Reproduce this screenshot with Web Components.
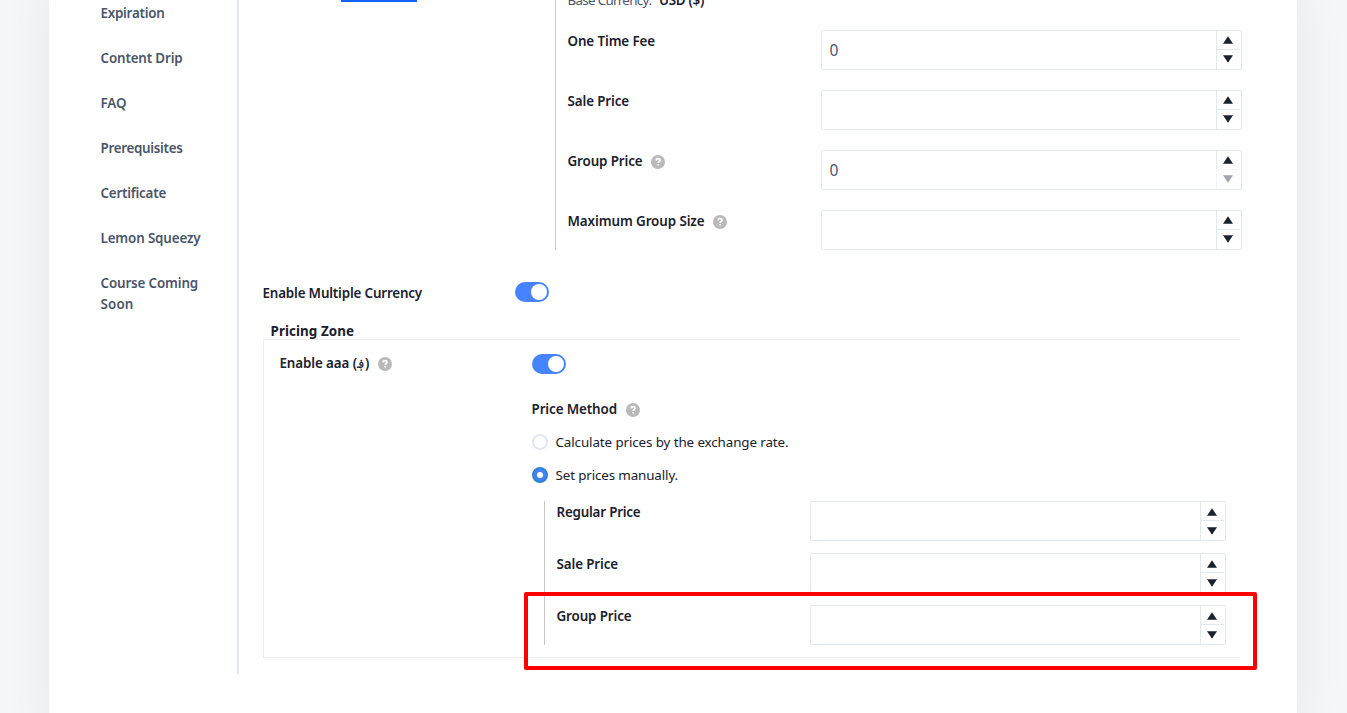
<!DOCTYPE html>
<html lang="en"><head><meta charset="utf-8"><title>Course pricing settings</title>
<style>
html,body{margin:0;height:713px;overflow:hidden;background:#f5f9fc}
body{font:570 13.4px/21px "Noto Sans","DejaVu Sans",sans-serif;color:#1a202c}
</style></head><body>
<course-page></course-page>
<script>
const define=(name,css,html,init)=>customElements.define(name,class extends HTMLElement{
  constructor(){super();this.attachShadow({mode:'open'})}
  connectedCallback(){
    this.shadowRoot.innerHTML=`<style>*{box-sizing:border-box}${css}</style>${typeof html==='function'?html(this):html}`;
    if(init)init(this);
  }
});

// One line of text whose tracking is adjusted to fill the given width.
define('fit-text',':host{display:block;white-space:nowrap;width:max-content;padding-top:1px;margin:0 0 -1px -.5px}','<span><slot></slot></span>',el=>{
  const want=+el.getAttribute('w'),n=el.textContent.length;
  if(!want)return;
  const now=el.shadowRoot.querySelector('span').getBoundingClientRect().width;
  el.style.letterSpacing=((want-now)/n).toFixed(3)+'px';
});

define('help-icon',':host{display:block;width:14px;height:14px}svg{display:block}',
`<svg width="14" height="14" viewBox="0 0 14 14"><circle cx="7" cy="7" r="7" fill="#b9b9b9"/><path d="M5 5.400C5.100 4.200 6 3.700 7 3.700c1.200 0 2 .7 2 1.600C9 6.500 7.200 6.600 7.200 8" fill="none" stroke="#fff" stroke-width="1.700"/><rect x="6.300" y="8.900" width="1.800" height="1.700" rx=".5" fill="#fff"/></svg>`);

define('toggle-switch',`:host{display:flex;justify-content:flex-end;width:34px;height:20px;padding:2px;border-radius:10px;background:#4683fe;box-sizing:border-box}
i{width:16px;height:16px;border-radius:50%;background:#fff}`,'<i></i>');

define('number-field',`:host{display:flex;flex:none;height:40px;border:1px solid #e2e8f0;border-radius:2px;box-sizing:border-box;background:#fff;padding-right:1px}
.v{flex:1;padding:0 0 0 7.500px;font-weight:400;font-size:15.500px;line-height:38px;color:#4a5568}
.s{width:24px;display:flex;flex-direction:column}
.s div{height:18px;border-left:1px solid #e2e8f0;display:flex;justify-content:center;padding-right:1px}
.s div+div{height:20px;border-top:1px solid #e2e8f0}
.s .off{opacity:.4}
svg{display:block;margin-top:var(--arrow-top,5px)}`,
el=>`<div class="v">${el.getAttribute('value')||''}</div><div class="s"><div><svg width="10" height="8"><path d="M5 .3L10 7.700H0z" fill="#1a202c"/></svg></div><div class="${el.hasAttribute('at-min')?'off':''}"><svg width="10" height="8"><path d="M0 .3H10L5 7.700z" fill="#1a202c"/></svg></div></div>`);

define('price-row',`:host{display:flex;justify-content:space-between;height:40px}
.l{display:flex;gap:8.500px;height:21px}help-icon{margin-top:5px}number-field{width:var(--field)}`,
el=>`<div class="l"><fit-text w="${el.getAttribute('w')}">${el.getAttribute('label')}</fit-text>${el.hasAttribute('help')?'<help-icon></help-icon>':''}</div><number-field value="${el.getAttribute('value')||''}" ${el.hasAttribute('at-min')?'at-min':''}></number-field>`);

define('radio-option',`:host{display:flex;gap:8px;height:21px;align-items:center;font-weight:400;font-size:13.400px}
i{flex:none;width:16px;height:16px;border-radius:50%;border:2px solid #e2e8f0;background:#fff}
:host([checked]) i{border-color:#3182ce;background:radial-gradient(circle,#fff 0 2.700px,#4683fe 3.300px)}`,'<i></i><slot></slot>');

define('settings-nav',`:host{display:flex;flex-direction:column;gap:24px;width:190px;height:674px;border-right:2px solid #e2e8f4;padding:2px 0 0 52px;box-sizing:border-box;color:#4a5568}`,
[['Expiration',64],['Content Drip',82],['FAQ',26],['Prerequisites',82],['Certificate',65.5],['Lemon Squeezy',100]].map(a=>`<fit-text w="${a[1]}">${a[0]}</fit-text>`).join('')+
'<div><fit-text w="97.500">Course Coming</fit-text><fit-text w="33">Soon</fit-text></div>');

define('pricing-group',`:host{display:flex;flex-direction:column;border-left:1px solid #c8c8c8;box-sizing:border-box}`,'<slot></slot>');

define('pricing-zone',`:host{display:block;width:977px}
.t{font-weight:700;padding-left:8px;height:19px;line-height:21px}
.box{height:319px;border:1px solid #eee;border-right:0;padding:14px 14px 0 16px;display:grid;grid-template-columns:252px 1fr;align-items:start}
.l{display:flex;gap:8.500px;margin-top:-2px}.l help-icon{margin-top:5px}
.m{display:flex;gap:9px;margin:24px 0 12px}.m help-icon{margin-top:5px}
radio-option+radio-option{margin-top:12px}
pricing-group{margin:16px 0 0 12px;padding-left:12px;gap:12px;--field:416px;--arrow-top:6px}`,
`<div class="t"><fit-text w="83.500">Pricing Zone</fit-text></div>
<div class="box"><div class="l"><fit-text w="89.500">Enable aaa (؋)</fit-text><help-icon></help-icon></div>
<div><toggle-switch></toggle-switch>
<div class="m"><fit-text w="85.500">Price Method</fit-text><help-icon></help-icon></div>
<radio-option><fit-text w="233">Calculate prices by the exchange rate.</fit-text></radio-option>
<radio-option checked><fit-text w="122.500">Set prices manually.</fit-text></radio-option>
<pricing-group><price-row label="Regular Price" w="84"></price-row><price-row label="Sale Price" w="61.500"></price-row><price-row label="Group Price" w="75"></price-row></pricing-group>
</div></div>`);

define('pricing-panel',`:host{display:block;flex:1;padding-left:24px;height:713px}
.top{display:grid;grid-template-columns:292px 687px;height:250px}
.tab{width:76px;height:2px;background:#0f62fe;margin-left:78px}
pricing-group{height:250px;padding-left:12px;gap:20px;--field:421px}
.base{display:flex;gap:8px;height:21px;margin:-11px 0 0;color:#4a5568;font-weight:400;line-height:21px}
.base b{font-weight:600;color:#1a202c}
.multi{display:flex;align-items:flex-start;height:38px;margin-top:32px}
.multi fit-text{width:252.500px}`,
`<div class="top"><div class="tab"></div><pricing-group>
<div class="base"><fit-text w="84">Base Currency:</fit-text><b><fit-text w="45">USD ($)</fit-text></b></div>
<price-row label="One Time Fee" w="87.500" value="0"></price-row>
<price-row label="Sale Price" w="61.500"></price-row>
<price-row label="Group Price" w="75" value="0" help at-min></price-row>
<price-row label="Maximum Group Size" w="137" help></price-row></pricing-group></div>
<div class="multi"><fit-text w="159.500">Enable Multiple Currency</fit-text><toggle-switch></toggle-switch></div>
<pricing-zone></pricing-zone>`);

define('course-page',`:host{display:block;position:relative;height:713px;overflow:hidden}
.card{display:flex;width:1248px;height:760px;margin-left:49px;background:#fff;box-shadow:0 -30px 0 #fff,0 -20px 60px rgba(0,0,0,.08)}
.mark{position:absolute;left:524px;top:592px;width:733px;height:78px;border:4px solid #f00;border-radius:2px;box-sizing:border-box}`,
`<div class="card"><settings-nav></settings-nav><pricing-panel></pricing-panel></div><div class="mark"></div>`);
</script></body></html>
